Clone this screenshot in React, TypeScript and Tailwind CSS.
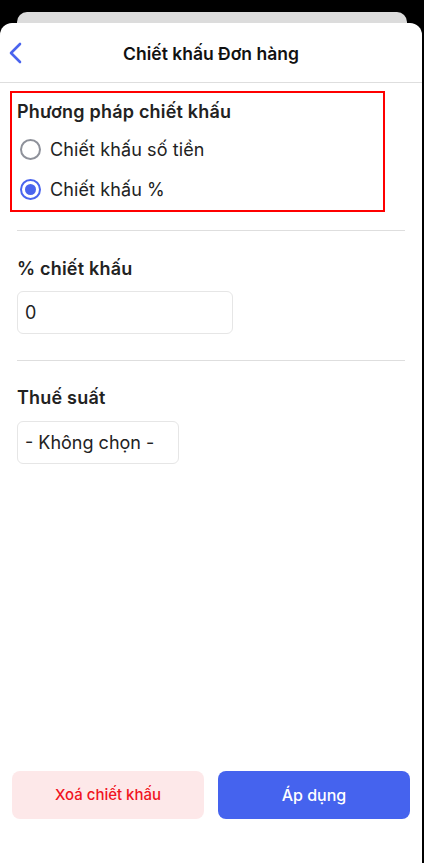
import React, { useState } from 'react';

const font = { fontFamily: 'Inter, "Noto Sans", sans-serif' };

const Radio: React.FC<{ checked: boolean; label: string; onClick: () => void }> = ({ checked, label, onClick }) => (
  <button onClick={onClick} className="flex items-center h-[40px] w-full text-left">
    <span
      className={`w-[21px] h-[21px] ml-[3px] rounded-full border-2 flex items-center justify-center shrink-0 ${
        checked ? 'border-[#4a64ee]' : 'border-[#8e919a]'
      }`}
    >
      {checked && <span className="w-[11px] h-[11px] rounded-full bg-[#4a64ee]" />}
    </span>
    <span className="ml-[9px] text-[18px] text-[#222] tracking-[0.1px]">{label}</span>
  </button>
);

export default function App() {
  const [method, setMethod] = useState<'amount' | 'percent'>('percent');

  return (
    <div className="h-[863px] bg-black flex flex-col pt-[12px]" style={font}>
      <div className="h-[20px] mx-[17px] rounded-t-[10px] bg-[#dcdcdc] shrink-0" />
      <div className="-mt-[9px] mr-[2px] flex-1 bg-white rounded-t-[12px] flex flex-col">
        <div className="h-[60px] relative flex items-center justify-center pt-[3px] border-b border-[#dedede] shrink-0">
          <button className="absolute left-[8px] top-[19px] text-[#4a64ee]">
            <svg width="16" height="22" viewBox="0 0 16 22" fill="none" stroke="currentColor" strokeWidth="2.6" strokeLinecap="round" strokeLinejoin="round">
              <polyline points="12,2 3,11 12,20" />
            </svg>
          </button>
          <h3 className="text-[17.5px] font-semibold text-[#111]">Chiết khấu Đơn hàng</h3>
        </div>

        <div className="flex-1 flex flex-col">
          <div className="mx-[10px] mt-[8px] w-[375px] border-2 border-[#ff0000] px-[5px] pt-[6px] pb-[1px]">
            <h4 className="text-[18px] font-semibold text-[#222] leading-[25px] tracking-[0.2px]">Phương pháp chiết khấu</h4>
            <div className="mt-[5px]">
              <Radio checked={method === 'amount'} label="Chiết khấu số tiền" onClick={() => setMethod('amount')} />
              <Radio checked={method === 'percent'} label="Chiết khấu %" onClick={() => setMethod('percent')} />
            </div>
          </div>

          <div className="mx-[17px] mt-[18px] border-t border-[#dedede]" />

          <div className="px-[17px] pt-[25px] pb-[26px]">
            <h4 className="text-[18px] font-semibold text-[#222] leading-[25px] tracking-[0.2px]">% chiết khấu</h4>
            <div className="mt-[10px] w-[216px] h-[43px] border border-[#e6e6e6] rounded-[6px] flex items-center px-[7px] text-[18px] text-[#222]">
              0
            </div>
          </div>

          <div className="mx-[17px] border-t border-[#dedede]" />

          <div className="px-[17px] pt-[24px]">
            <h4 className="text-[18px] font-semibold text-[#222] leading-[25px] tracking-[0.2px]">Thuế suất</h4>
            <div className="mt-[11px] w-[162px] h-[43px] border border-[#e6e6e6] rounded-[6px] flex items-center px-[7px] text-[18px] text-[#222]">
              - Không chọn -
            </div>
          </div>
        </div>

        <div className="flex gap-[14px] px-[12px] pb-[44px] shrink-0">
          <button className="flex-1 h-[48px] rounded-[8px] bg-[#fde8e9] text-[#f0141e] text-[15px] font-medium">
            Xoá chiết khấu
          </button>
          <button className="flex-1 h-[48px] rounded-[8px] bg-[#4563ee] text-white text-[16px] font-medium">
            Áp dụng
          </button>
        </div>
      </div>
    </div>
  );
}
